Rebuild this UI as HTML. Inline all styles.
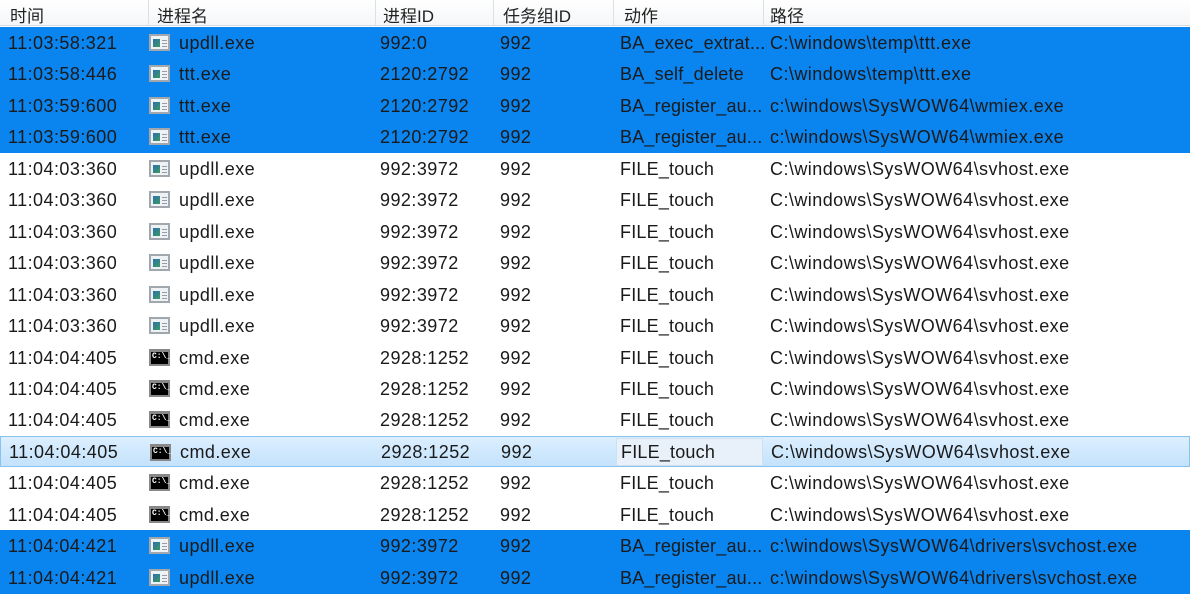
<!DOCTYPE html>
<html><head><meta charset="utf-8"><style>
body{margin:0;width:1190px;height:594px;overflow:hidden;background:#fff;font-family:"Liberation Sans","Noto Sans CJK SC",sans-serif;font-size:18px;color:#1a1a1a;position:relative}
.hdr{position:absolute;left:0;top:0;width:1190px;height:25px;background:linear-gradient(#fff,#f4f6f8);border-bottom:1px solid #d5dae0}
.hdr span{position:absolute;top:2px;font-size:17px;color:#222}
.sep{position:absolute;top:0;width:1px;height:25px;background:#dde1e6}
.row{position:absolute;left:0;width:1190px;height:32px}
.row span{position:absolute;top:6px;white-space:nowrap;letter-spacing:0.45px}
.row span.ac{letter-spacing:0.2px}
.b{background:#0a84ef}
.sel{background:linear-gradient(#dcefff,#c4e2fb);border:1px solid #88c3f0;box-sizing:border-box;width:1190px;height:31px}
.sel span{top:5px}
.foc{position:absolute;left:615px;top:1px;width:147px;height:28px;background:#e8f1fa;border:1px solid #cfe0ef;box-sizing:border-box}
.ic{position:absolute;left:149px;top:7px;width:21px;height:17px;box-sizing:border-box;border:2px solid #a0a8ae;background:#eef2f4}
.ic i{position:absolute;left:2px;top:3px;width:7px;height:8px;background:linear-gradient(135deg,#2d6fb0,#3a9a60)}
.ic b{position:absolute;left:11px;top:4px;width:5px;height:1px;background:#99a;box-shadow:0 3px #99a,0 6px #99a}
.cm{position:absolute;left:149px;top:7px;width:21px;height:17px;box-sizing:border-box;border:2px solid #888;border-top-width:3px;background:#000;color:#fff;font-size:8px;line-height:10px;font-family:"Liberation Mono",monospace;font-weight:bold;padding-left:1px}
</style></head><body>
<div class="hdr">
<span style="left:10px">时间</span><span style="left:157px">进程名</span><span style="left:383px">进程ID</span><span style="left:503px">任务组ID</span><span style="left:624px">动作</span><span style="left:770px">路径</span>
<div class="sep" style="left:148px"></div><div class="sep" style="left:375px"></div><div class="sep" style="left:493px"></div><div class="sep" style="left:613px"></div><div class="sep" style="left:763px"></div>
</div>
<div id="rows"></div>
<script>
var d=[
["11:03:58:321","updll.exe","992:0","BA_exec_extrat...","C:\\windows\\temp\\ttt.exe",1,0],
["11:03:58:446","ttt.exe","2120:2792","BA_self_delete","C:\\windows\\temp\\ttt.exe",1,0],
["11:03:59:600","ttt.exe","2120:2792","BA_register_au...","c:\\windows\\SysWOW64\\wmiex.exe",1,0],
["11:03:59:600","ttt.exe","2120:2792","BA_register_au...","c:\\windows\\SysWOW64\\wmiex.exe",1,0]];
for(var i=0;i<6;i++)d.push(["11:04:03:360","updll.exe","992:3972","FILE_touch","C:\\windows\\SysWOW64\\svhost.exe",0,0]);
for(var i=0;i<6;i++)d.push(["11:04:04:405","cmd.exe","2928:1252","FILE_touch","C:\\windows\\SysWOW64\\svhost.exe",0,1]);
for(var i=0;i<2;i++)d.push(["11:04:04:421","updll.exe","992:3972","BA_register_au...","c:\\windows\\SysWOW64\\drivers\\svchost.exe",1,0]);
var h="";
d.forEach(function(r,i){
var t=Math.round(27+i*31.45);
var cls="row"+(r[5]?" b":"")+(i==13?" sel":"");
h+='<div class="'+cls+'" style="top:'+t+'px">'+(i==13?'<div class="foc"></div>':'')+
'<span style="left:8px">'+r[0]+'</span>'+
(r[6]?'<div class="cm">C:\\_</div>':'<div class="ic"><i></i><b></b></div>')+
'<span style="left:179px">'+r[1]+'</span><span style="left:380px">'+r[2]+'</span><span style="left:500px">992</span><span class="ac" style="left:620px">'+r[3]+'</span><span style="left:770px">'+r[4]+'</span></div>';
});
document.getElementById("rows").innerHTML=h;
</script>
</body></html>
